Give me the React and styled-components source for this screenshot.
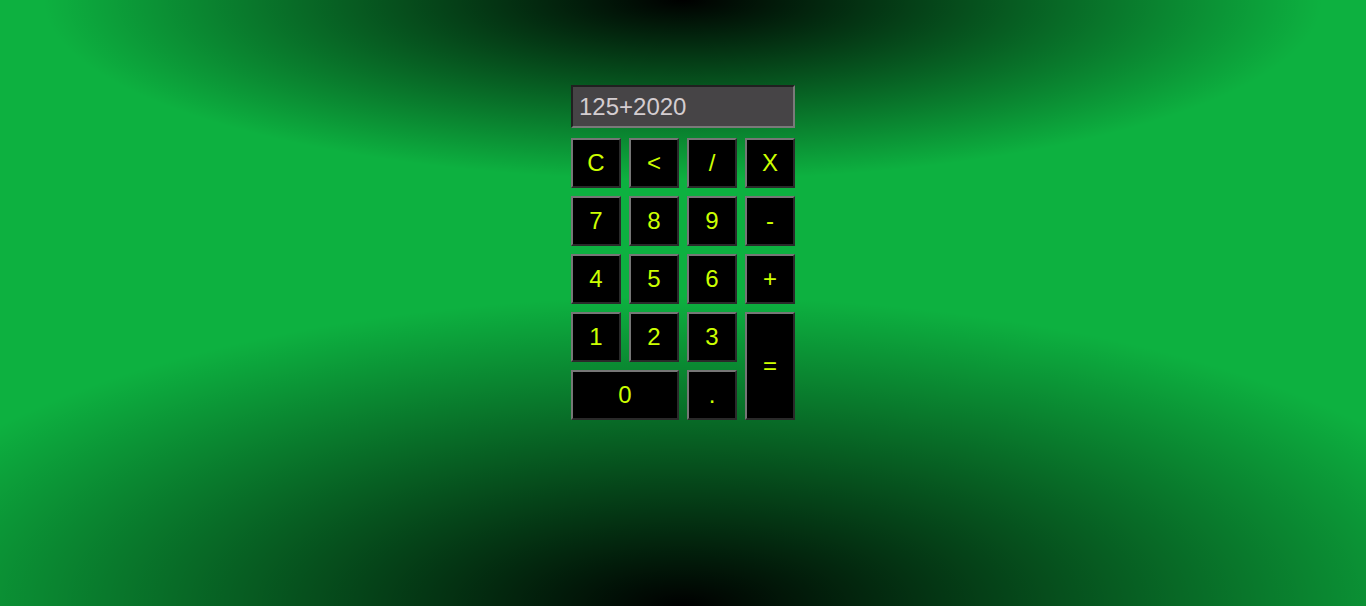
import React from "react";
import styled, { createGlobalStyle } from "styled-components";

const Global = createGlobalStyle`
  html, body { margin: 0; padding: 0; height: 100%; }
  body {
    min-height: 100vh;
    font-family: "Liberation Sans", Arial, sans-serif;
    background:
      radial-gradient(ellipse 640px 180px at 50% 0%, #000 0%, rgba(0,0,0,0) 100%),
      radial-gradient(ellipse 843px 310px at 50% 100%, #000 0%, rgba(0,0,0,0) 100%),
      #0db140;
  }
  #root { min-height: 100vh; }
`;

const Page = styled.div`
  min-height: 100vh;
  display: flex;
  justify-content: center;
  align-items: flex-start;
  padding-top: 85px;
  box-sizing: border-box;
`;

const Calculator = styled.div`
  display: flex;
  flex-direction: column;
  gap: 10px;
  width: 224px;
`;

const Display = styled.input`
  box-sizing: border-box;
  width: 224px;
  height: 43px;
  margin: 0;
  padding: 0 6px;
  border-style: solid;
  border-width: 2px;
  border-color: #202020 #7a7a7a #7a7a7a #202020;
  background: #464446;
  color: #d4cdd0;
  font-family: "Liberation Sans", Arial, sans-serif;
  font-size: 24px;
  outline: none;
`;

const Keys = styled.div`
  display: grid;
  grid-template-columns: repeat(4, 50px);
  grid-auto-rows: 50px;
  gap: 8px;
`;

const Key = styled.button`
  box-sizing: border-box;
  margin: 0;
  padding: 0;
  border-style: solid;
  border-width: 2px;
  border-color: #767676 #2a2a2a #2a2a2a #767676;
  background: #000;
  color: #ccff00;
  font-family: "Liberation Sans", Arial, sans-serif;
  font-size: 24px;
  display: flex;
  align-items: center;
  justify-content: center;
  cursor: pointer;
  grid-column: ${(p) => (p.$wide ? "span 2" : "auto")};
  grid-row: ${(p) => (p.$tall ? "span 2" : "auto")};
`;

const keys = [
  { k: "C" }, { k: "<" }, { k: "/" }, { k: "X" },
  { k: "7" }, { k: "8" }, { k: "9" }, { k: "-" },
  { k: "4" }, { k: "5" }, { k: "6" }, { k: "+" },
  { k: "1" }, { k: "2" }, { k: "3" }, { k: "=", tall: true },
  { k: "0", wide: true }, { k: "." },
];

export default function App() {
  return (
    <>
      <Global />
      <Page>
        <Calculator>
          <Display type="text" defaultValue="125+2020" readOnly />
          <Keys>
            {keys.map((b) => (
              <Key key={b.k} $wide={b.wide} $tall={b.tall}>
                {b.k}
              </Key>
            ))}
          </Keys>
        </Calculator>
      </Page>
    </>
  );
}
